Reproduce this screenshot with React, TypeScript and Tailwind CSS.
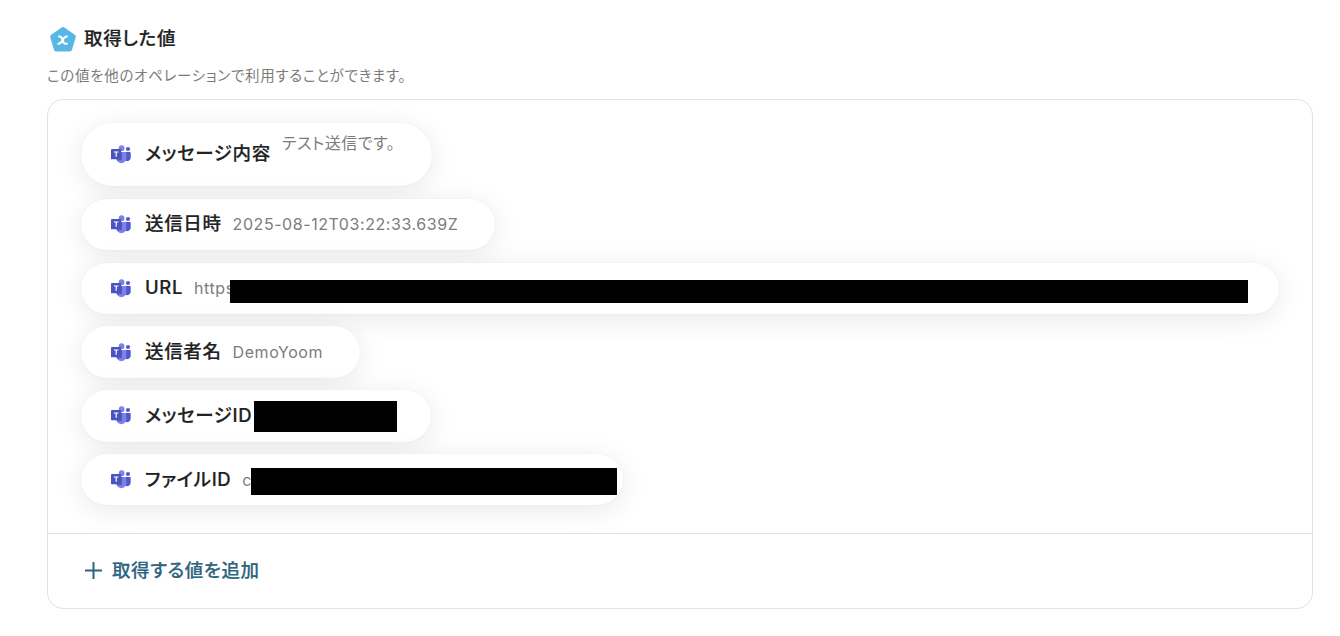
import React from 'react';

interface OutputValue {
    label: string;
    value: string;
    pillClass: string;
    valueClass?: string;
    maskClass?: string;
}

const outputs: OutputValue[] = [
    { label: 'メッセージ内容', value: 'テスト送信です。', pillClass: 'w-[351px] h-[63px]', valueClass: 'self-start mt-[8px]' },
    { label: '送信日時', value: '2025-08-12T03:22:33.639Z', pillClass: 'w-[414px] h-[51.2px]' },
    { label: 'URL', value: 'https', pillClass: 'w-[1198px] h-[51.2px]', maskClass: 'left-[149px] top-[17px] w-[1018px] h-[23px]' },
    { label: '送信者名', value: 'DemoYoom', pillClass: 'w-[279px] h-[51.2px]' },
    { label: 'メッセージID', value: '', pillClass: 'w-[350px] h-[51.2px]', maskClass: 'left-[173px] top-[11px] w-[143px] h-[31px]' },
    { label: 'ファイルID', value: 'c', pillClass: 'w-[542px] h-[51.2px]', maskClass: 'left-[170px] top-[14px] w-[366px] h-[27px]' },
];

const TeamsIcon: React.FC<{ className?: string }> = ({ className }) => (
    <svg viewBox="0 0 20 19" className={className}>
        <circle cx="10.6" cy="3.2" r="2.9" fill="#7b83eb" />
        <circle cx="17" cy="4" r="2.1" fill="#5059c9" />
        <path d="M13.5 7h5.3c.5 0 .9.4.9.9v4.9a3.3 3.3 0 0 1-5.5 2.5z" fill="#5059c9" />
        <path d="M6.3 7h8.1c.5 0 .9.4.9.9v5.5a4.9 4.9 0 0 1-9.8 0V7.8z" fill="#7b83eb" />
        <path d="M5.6 7h5.6v7.4c0 .6-.4 1-1 1H6a5 5 0 0 1-.4-2z" fill="#5a62c3" />
        <rect x="0" y="4.1" width="10.2" height="10.2" rx=".9" fill="#4b53bc" />
        <path d="M2.9 6.5h4.6v1.1H5.8v4.2H4.6V7.6H2.9z" fill="#fff" />
    </svg>
);

const ValueIcon: React.FC<{ className?: string }> = ({ className }) => (
    <svg viewBox="0 0 26 26" className={className}>
        <path d="M13 2.4 23.4 9.8 19.6 22.2H6.4L2.6 9.8z" fill="#58b7e5" stroke="#58b7e5" strokeWidth="4.8" strokeLinejoin="round" />
        <path d="M9 9.6h.8c1.1 0 1.5.4 1.9 1.3l1.9 4.4c.4.9.8 1.4 1.9 1.4h1.4M17 9.4c-2.6-.2-3.3 1.7-4.4 3.7s-1.9 3.8-4.3 3.6" fill="none" stroke="#fff" strokeWidth="2" strokeLinecap="round" />
    </svg>
);

const ValuePill: React.FC<{ item: OutputValue }> = ({ item }) => (
    <div className={`relative flex items-center rounded-full bg-white pl-[29.5px] shadow-[0_5px_28px_rgba(0,0,0,0.09),0_0_2px_rgba(0,0,0,0.05)] ${item.pillClass}`}>
        <TeamsIcon className="w-5 h-[19px] shrink-0" />
        <span className="ml-[14.5px] text-[18.5px] leading-7 font-medium tracking-[0.65px] text-[#222] [-webkit-text-stroke:0.2px] whitespace-nowrap -mt-[2.4px]">{item.label}</span>
        {item.value && (
            <span className={`ml-[11px] text-base leading-6 tracking-[0.56px] text-[#7c7c7c] whitespace-nowrap ${item.valueClass ?? ''}`}>{item.value}</span>
        )}
        {item.maskClass && <div className={`absolute bg-black ${item.maskClass}`} />}
    </div>
);

const App: React.FC = () => {
    return (
        <div className="h-[636px] overflow-hidden bg-white pl-[47px] pr-[27px] pt-[24px] font-['Inter','Noto_Sans_CJK_JP',sans-serif] [font-feature-settings:'palt']">
            <header className="flex items-center h-7">
                <ValueIcon className="ml-[3px] mt-[3px] w-[26px] h-[26px]" />
                <h1 className="ml-2 text-[18.5px] leading-7 font-medium tracking-[0.65px] text-[#222] [-webkit-text-stroke:0.2px]">取得した値</h1>
            </header>
            <p className="mt-[14px] text-[14.5px] leading-5 tracking-[0.7px] text-[#7c7c7c]">この値を他のオペレーションで利用することができます。</p>
            <section className="mt-[13px] h-[510px] rounded-2xl border border-[#e2e2e2] overflow-hidden">
                <div className="h-[434px] border-b border-[#e2e2e2] pl-[33px] pt-[23px] flex flex-col items-start gap-[12.7px]">
                    {outputs.map(item => (
                        <ValuePill key={item.label} item={item} />
                    ))}
                </div>
                <button className="flex items-center h-[74px] pl-[37px] text-[#2d6580]">
                    <svg viewBox="0 0 17 17" className="w-[17px] h-[17px] -mt-[2px]">
                        <path d="M8.5 0v17M0 8.5h17" stroke="currentColor" strokeWidth="2" />
                    </svg>
                    <span className="ml-[10px] -mt-[2px] text-[18.5px] leading-7 font-medium tracking-[0.6px] [-webkit-text-stroke:0.2px]">取得する値を追加</span>
                </button>
            </section>
        </div>
    );
};

export default App;
